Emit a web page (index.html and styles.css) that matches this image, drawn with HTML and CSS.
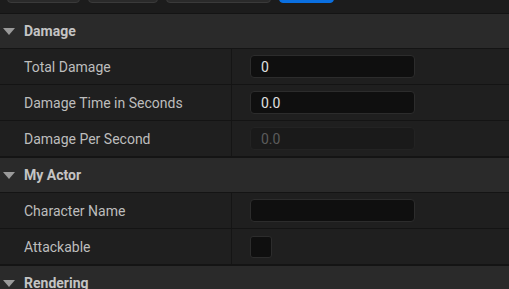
FILE: index.html
```html
<!DOCTYPE html>
<html lang="en">
<head>
    <meta charset="UTF-8">
    <title>Details</title>
    <link rel="stylesheet" href="styles.css">
</head>
<body>
    <div class="toolbar">
        <span class="tb-btn w73"></span>
        <span class="tb-btn w70"></span>
        <span class="tb-btn w105"></span>
        <span class="tb-btn blue w55"></span>
    </div>

    <div class="section">
        <div class="header"><span class="arrow"></span>Damage</div>
        <div class="row">
            <div class="label">Total Damage</div>
            <div class="value"><div class="input">0</div></div>
        </div>
        <div class="row">
            <div class="label">Damage Time in Seconds</div>
            <div class="value"><div class="input">0.0</div></div>
        </div>
        <div class="row">
            <div class="label">Damage Per Second</div>
            <div class="value"><div class="input disabled">0.0</div></div>
        </div>
    </div>

    <div class="section">
        <div class="header"><span class="arrow"></span>My Actor</div>
        <div class="row">
            <div class="label">Character Name</div>
            <div class="value"><div class="input"></div></div>
        </div>
        <div class="row">
            <div class="label">Attackable</div>
            <div class="value"><div class="checkbox"></div></div>
        </div>
    </div>

    <div class="section">
        <div class="header"><span class="arrow"></span>Rendering</div>
    </div>
</body>
</html>
```

FILE: styles.css
```css
body {
    margin: 0;
    background: #141414;
    font-family: Roboto, "Liberation Sans", sans-serif;
    font-size: 14px;
    color: #bdbdbd;
    overflow: hidden;
}
.toolbar {
    height: 13px;
    margin-bottom: 1px;
    background: #1c1c1c;
    display: flex;
    gap: 8px;
    padding-left: 7px;
    overflow: hidden;
}
.tb-btn {
    display: block;
    height: 24px;
    margin-top: -21px;
    background: #2a2a2a;
    border: 1px solid #3a3a3a;
    border-radius: 4px;
    box-sizing: border-box;
}
.tb-btn.blue {
    background: #0a6fe0;
    border-color: #0a6fe0;
}
.w73 { width: 73px; }
.w70 { width: 70px; }
.w105 { width: 105px; }
.w55 { width: 55px; }
.section {
    display: flex;
    flex-direction: column;
    gap: 1px;
    margin-bottom: 2px;
}
.header {
    height: 34px;
    background: #2a2a2a;
    display: flex;
    align-items: center;
    font-weight: bold;
    color: #c4c4c4;
    padding-left: 24px;
    position: relative;
}
.arrow {
    position: absolute;
    left: 3px;
    top: 14px;
    width: 0;
    height: 0;
    border-left: 6px solid transparent;
    border-right: 6px solid transparent;
    border-top: 7px solid #9a9a9a;
}
.row {
    height: 35px;
    display: flex;
    background: #1f1f1f;
}
.label {
    width: 232px;
    padding-left: 24px;
    box-sizing: border-box;
    display: flex;
    align-items: center;
    border-right: 1px solid #151515;
}
.value {
    flex: 1;
    display: flex;
    align-items: center;
    padding-left: 18px;
}
.input {
    width: 165px;
    height: 23px;
    box-sizing: border-box;
    background: #0f0f0f;
    border: 1px solid #2c2c2c;
    border-radius: 4px;
    padding-left: 10px;
    display: flex;
    align-items: center;
    color: #e0e0e0;
}
.input.disabled {
    background: #1a1a1a;
    border-color: #232323;
    color: #5c5c5c;
}
.checkbox {
    width: 22px;
    height: 22px;
    box-sizing: border-box;
    background: #0f0f0f;
    border: 1px solid #2c2c2c;
    border-radius: 3px;
}
```
